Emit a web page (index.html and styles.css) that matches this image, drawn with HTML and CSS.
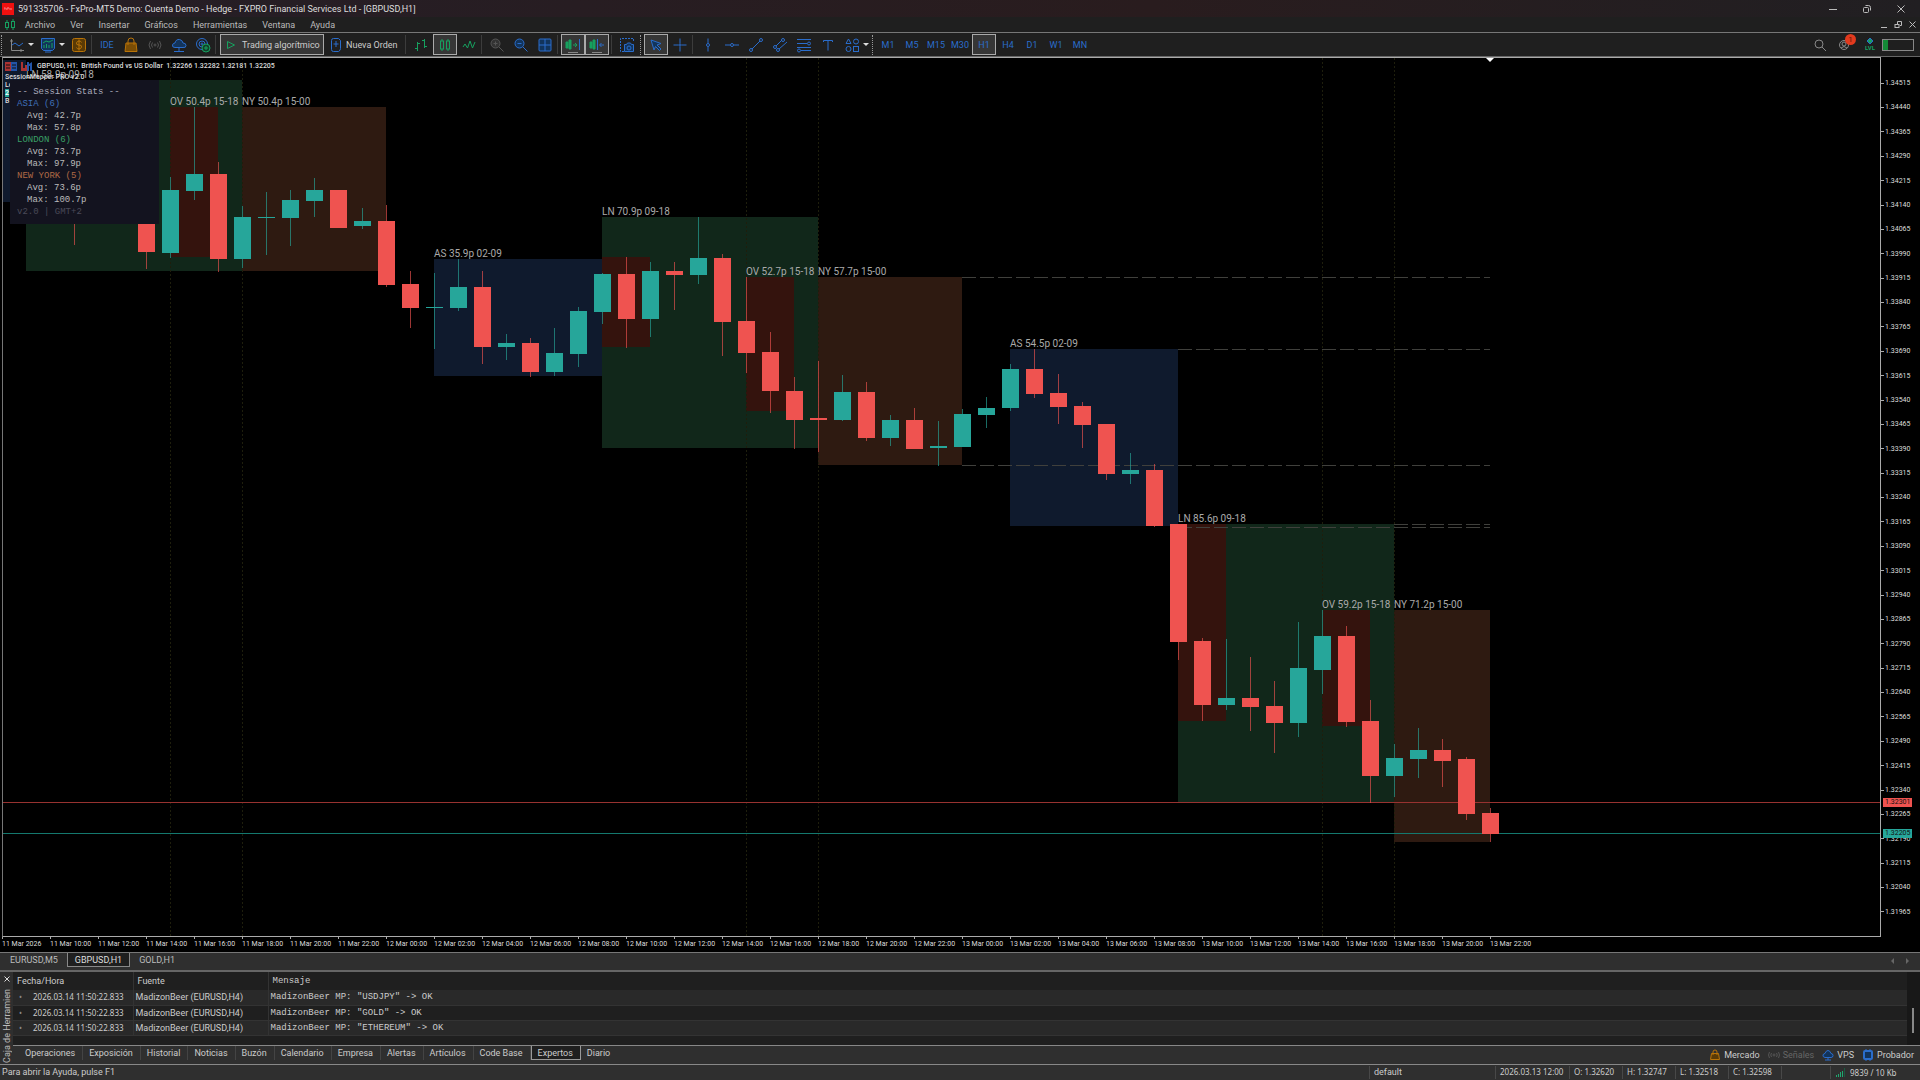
FILE: index.html
```html
<!DOCTYPE html>
<html lang="es">
<head>
    <meta charset="UTF-8">
    <meta name="viewport" content="width=device-width, initial-scale=1.0">
    <title>591335706 - FxPro-MT5 Demo</title>
    <link rel="stylesheet" href="styles.css">
</head>
<body>
    <header class="titlebar">
        <span class="logo">FxPro</span>
        <h1>591335706 - FxPro-MT5 Demo: Cuenta Demo - Hedge - FXPRO Financial Services Ltd - [GBPUSD,H1]</h1>
        <div class="window-buttons">
            <button aria-label="Minimizar"><svg width="10" height="10"><path d="M1 5.5h8"/></svg></button>
            <button aria-label="Restaurar"><svg width="10" height="10"><rect x="1.5" y="3.5" width="5" height="5" rx="1"/><path d="M3.5 1.5h3q2 0 2 2v3"/></svg></button>
            <button aria-label="Cerrar"><svg width="10" height="10"><path d="M1.5 1.5l7 7M8.5 1.5l-7 7"/></svg></button>
        </div>
    </header>

    <nav class="menubar">
        <svg class="green" width="12" height="12"><rect x="1.5" y="3.5" width="3" height="5"/><rect x="7.5" y="2.5" width="3" height="6"/><path d="M3 1v2M3 9v2M9 0v2M9 9v2"/></svg>
        <button>Archivo</button>
        <button>Ver</button>
        <button>Insertar</button>
        <button>Gráficos</button>
        <button>Herramientas</button>
        <button>Ventana</button>
        <button>Ayuda</button>
        <div class="mdi-buttons">
            <button aria-label="Minimizar gráfico"><svg width="9" height="9"><path d="M1 7.5h6"/></svg></button>
            <button aria-label="Restaurar gráfico"><svg width="9" height="9"><rect x="1" y="4.5" width="4" height="3"/><path d="M3.5 4V1.5h4v4H6"/></svg></button>
            <button aria-label="Cerrar gráfico"><svg width="9" height="9"><path d="M1.5 1.5l6 6M7.5 1.5l-6 6"/></svg></button>
        </div>
    </nav>

    <div class="toolbar">
        <i class="grip"></i>
        <button class="tool drop" aria-label="Tipo de gráfico"><svg width="16" height="16"><path class="grey" d="M2.5 2v11.5H15M1 4h3M12 12v3"/><path d="M3 8l3-2 4 3 4-3"/></svg></button>
        <button class="tool drop" aria-label="Indicadores"><svg width="16" height="16"><path fill="#12345c" d="M1.5 1.5h13v10l-2 2h-9l-2-2zM5 15h6"/><path class="green" d="M4 11V8M6.5 11V7M9 11V8M12 11V6M3 6l3-2 3 1 4-2"/></svg></button>
        <button class="tool orange" aria-label="Cuenta"><svg width="16" height="16"><rect x="1.5" y="1.5" width="13" height="13" rx="2" fill="#5a3a05"/><path d="M10.5 5.5Q10 4 8 4T5.5 6 8 8t2.5 2T8 12t-2.5-1.5M8 2.5v11"/></svg></button>
        <i class="sep"></i>
        <button class="tool text">IDE</button>
        <button class="tool orange" aria-label="Mercado"><svg width="16" height="16"><path fill="#7a4d05" d="M3 6h10l1 8.5H2z"/><path d="M5 8V4q0-3 3-3t3 3v4"/></svg></button>
        <button class="tool dim" aria-label="Señales"><svg width="16" height="16"><circle cx="8" cy="8" r="1"/><path d="M5.5 5.5q-2 2.5 0 5M10.5 5.5q2 2.5 0 5M3.5 4q-3 4 0 8M12.5 4q3 4 0 8"/></svg></button>
        <button class="tool" aria-label="VPS"><svg width="16" height="16"><path fill="#12345c" d="M4 10.5Q1 10.5 1.5 8 2 6 4 6q1-4 4.5-3.5Q11.5 3 12 6q3 0 3 2.5t-3 2zM8 11v3M3 14.5h10"/></svg></button>
        <button class="tool" aria-label="Copiar"><svg width="16" height="16"><circle cx="7" cy="7" r="5.5"/><circle cx="7" cy="7" r="3"/><circle cx="7" cy="7" r="1"/><circle class="green" cx="11" cy="11" r="4" fill="#12402b"/><path class="green" d="M11 9v4M9 11h4"/></svg></button>
        <i class="sep"></i>
        <button class="wide algo pressed"><svg class="green" width="12" height="12"><path d="M2.5 2.5v7L9.5 6z"/></svg>Trading algorítmico</button>
        <button class="wide order"><svg width="12" height="16"><path d="M3.5 1.5h5l2 2v8q0 2-2 3h-5q-2 0-2-2v-9q0-2 2-2zM6 4v6M3.5 7h5"/></svg>Nueva Orden</button>
        <i class="sep"></i>
        <button class="tool green" aria-label="Barras"><svg width="16" height="16"><path d="M4.5 5v9M2 11.5h2.5M4.5 6.5H7M11.5 2v9M9 3.5h2.5M11.5 9.5H14"/></svg></button>
        <button class="tool pressed green" aria-label="Velas"><svg width="16" height="16"><rect x="3.5" y="4" width="3" height="8"/><rect x="9.5" y="4" width="3" height="8"/><path d="M5 2v2M5 12v2M11 2v2M11 12v2"/></svg></button>
        <button class="tool green" aria-label="Línea"><svg width="16" height="16"><path d="M2 10l2-3 2.5 4L9 4l2.5 7L14 5"/></svg></button>
        <i class="sep"></i>
        <button class="tool dim" aria-label="Acercar"><svg width="16" height="16"><circle cx="6.5" cy="6.5" r="4.5" fill="#333"/><path d="M10 10l4.5 4.5M4.5 6.5h4M6.5 4.5v4"/></svg></button>
        <button class="tool" aria-label="Alejar"><svg width="16" height="16"><circle cx="6.5" cy="6.5" r="4.5" fill="#12345c"/><path d="M10 10l4.5 4.5M4.5 6.5h4"/></svg></button>
        <button class="tool" aria-label="Mosaico"><svg width="16" height="16"><rect x="2" y="2" width="12" height="12" rx="1" fill="#12345c"/><path d="M8 2v12M2 8h12"/></svg></button>
        <i class="sep"></i>
        <button class="tool pressed" aria-label="Autodesplazamiento"><svg width="18" height="16"><g class="green"><path fill="#16a05f" d="M2 5h2v6H2zM5 3h2v9H5z"/><path d="M9 8h4M11 6l2 2-2 2"/></g><path d="M15.5 2v11"/><path class="grey" d="M4 15.5h10"/></svg></button>
        <button class="tool pressed" aria-label="Desplazamiento"><svg width="18" height="16"><path class="green" fill="#16a05f" d="M2 5h2v6H2zM5 3h2v9H5z"/><path d="M9.5 2v11M16 8h-4M13.5 6l-2 2 2 2"/><path class="grey" d="M4 15.5h10"/></svg></button>
        <i class="sep spaced"></i>
        <button class="tool" aria-label="Captura"><svg width="16" height="16"><path stroke-dasharray="2 1" d="M5 14.5H1.5v-13h13V5"/><path fill="#12345c" d="M5.5 7.5h2l1-1.5h3l1 1.5h2v7h-9z"/><circle cx="10" cy="11" r="2"/></svg></button>
        <i class="grip"></i>
        <button class="tool pressed" aria-label="Cursor"><svg width="16" height="16"><path fill="#12345c" d="M3 3l10 3.5L9 8l4 4-1.5 1.5-4-4L6 13z"/></svg></button>
        <button class="tool" aria-label="Cruz"><svg width="16" height="16"><path d="M8 1.5v5M8 9.5v5M1.5 8h5M9.5 8h5"/><circle cx="8" cy="8" r="1"/></svg></button>
        <i class="sep"></i>
        <button class="tool" aria-label="Línea vertical"><svg width="16" height="16"><path d="M8 1.5V6M8 10v4.5"/><circle cx="8" cy="8" r="1.5"/></svg></button>
        <button class="tool" aria-label="Línea horizontal"><svg width="16" height="16"><path d="M1 8h5M10 8h5"/><circle cx="8" cy="8" r="1.5"/></svg></button>
        <button class="tool" aria-label="Línea de tendencia"><svg width="16" height="16"><path d="M4 12l8-8"/><circle cx="3" cy="13" r="1.5"/><circle cx="13" cy="3" r="1.5"/></svg></button>
        <button class="tool" aria-label="Canal"><svg width="16" height="16"><path d="M4 9l6-6M7 12l8-7"/><circle cx="3" cy="10" r="1.5"/><circle cx="11" cy="3" r="1.5"/><circle cx="6" cy="13" r="1.5"/></svg></button>
        <button class="tool" aria-label="Fibonacci"><svg width="16" height="16"><path d="M1 2.5h14M1 6.5h10M1 10.5h14M5 13.5h10"/><circle cx="13" cy="6.5" r="1.5"/><circle cx="3" cy="13.5" r="1.5"/></svg></button>
        <button class="tool" aria-label="Texto"><svg width="16" height="16"><path d="M3.5 5V3.5h9V5M8 3.5v10"/></svg></button>
        <button class="tool drop" aria-label="Objetos"><svg width="16" height="16"><path d="M4.5 2L7 6.5H2z"/><circle cx="12" cy="4.5" r="2.5"/><circle cx="4.5" cy="12" r="2.5"/><rect x="9.5" y="9.5" width="5" height="5"/></svg></button>
        <i class="grip"></i>
        <button class="tool text">M1</button>
        <button class="tool text">M5</button>
        <button class="tool text">M15</button>
        <button class="tool text">M30</button>
        <button class="tool text pressed">H1</button>
        <button class="tool text">H4</button>
        <button class="tool text">D1</button>
        <button class="tool text">W1</button>
        <button class="tool text">MN</button>
        <div class="tool-right">
            <button class="tool grey" aria-label="Buscar"><svg width="14" height="14"><circle cx="6" cy="6" r="4"/><path d="M9 9l4 4"/></svg></button>
            <button class="tool grey user" aria-label="Perfil"><svg width="14" height="14"><circle cx="7" cy="7" r="4.5"/><circle cx="7" cy="6" r="2"/><path d="M4 10q3-3 6 0"/></svg><span class="badge">1</span></button>
            <button class="tool level"><svg width="8" height="7"><path fill="#16a05f" d="M4 0l3 3-3 3-3-3z"/></svg>LVL</button>
            <progress class="battery" max="100" value="18" aria-label="Nivel"></progress>
        </div>
    </div>

    <main class="chart">
        <div class="plot">
            <svg id="plot" class="plot-svg"></svg>
            <div class="chart-title">
                <svg width="29" height="9"><path fill="#a33" d="M0 0h6v9H0z"/><path fill="#25a" d="M6 0h6v9H6z"/><path stroke="#111" d="M1 3h4M7 3h4M1 6h4M7 6h4"/><path fill="#a33" d="M16 0h2v6h2V3h2v6h-6z"/><path fill="#25a" d="M22 9V0h2v2l3-2v9h-2V4h-1v5z"/></svg>
                <span>GBPUSD, H1:&nbsp; British Pound vs US Dollar&nbsp; 1.32266 1.32282 1.32181 1.32205</span>
            </div>
            <div class="comment">SessionMapper PRO v2.0<br>Lo<br><mark>2</mark><br>B</div>
            <section class="stats">
                <h2>-- Session Stats --</h2>
                <p class="asia">ASIA (6)</p>
                <p class="sub">Avg: 42.7p</p>
                <p class="sub">Max: 57.8p</p>
                <p class="london">LONDON (6)</p>
                <p class="sub">Avg: 73.7p</p>
                <p class="sub">Max: 97.9p</p>
                <p class="newyork">NEW YORK (5)</p>
                <p class="sub">Avg: 73.6p</p>
                <p class="sub">Max: 100.7p</p>
                <p class="version">v2.0 | GMT+2</p>
            </section>
        </div>
        <div class="prices" id="prices">
            <span class="tag bid">1.32301</span>
            <span class="tag ask">1.32205</span>
        </div>
        <div class="times" id="times"></div>
    </main>

    <div class="chart-tabs">
        <button>EURUSD,M5</button>
        <button class="active">GBPUSD,H1</button>
        <button>GOLD,H1</button>
        <div class="arrows"><button aria-label="Anterior" class="prev"></button><button aria-label="Siguiente" class="next"></button></div>
    </div>

    <section class="toolbox">
        <aside class="toolbox-side">
            <button aria-label="Cerrar"><svg width="8" height="8"><path d="M1.5 1.5l5 5M6.5 1.5l-5 5"/></svg></button>
            <span>Caja de Herramien</span>
        </aside>
        <div class="log">
            <table>
                <thead>
                    <tr><th class="date">Fecha/Hora</th><th class="source">Fuente</th><th class="mono">Mensaje</th></tr>
                </thead>
                <tbody>
                    <tr><td>2026.03.14 11:50:22.833</td><td>MadizonBeer (EURUSD,H4)</td><td class="mono">MadizonBeer MP: "USDJPY" -&gt; OK</td></tr>
                    <tr><td>2026.03.14 11:50:22.833</td><td>MadizonBeer (EURUSD,H4)</td><td class="mono">MadizonBeer MP: "GOLD" -&gt; OK</td></tr>
                    <tr><td>2026.03.14 11:50:22.833</td><td>MadizonBeer (EURUSD,H4)</td><td class="mono">MadizonBeer MP: "ETHEREUM" -&gt; OK</td></tr>
                </tbody>
            </table>
            <div class="scrollbar"><i></i></div>
        </div>
        <div class="toolbox-tabs">
            <button>Operaciones</button>
            <button>Exposición</button>
            <button>Historial</button>
            <button>Noticias</button>
            <button>Buzón</button>
            <button>Calendario</button>
            <button>Empresa</button>
            <button>Alertas</button>
            <button>Artículos</button>
            <button>Code Base</button>
            <button class="active">Expertos</button>
            <button>Diario</button>
            <div class="services">
                <a href="#"><svg class="orange" width="12" height="12"><path fill="#5a3a05" d="M2.5 4.5h7l1 6h-9z"/><path d="M4 6V3q0-2 2-2t2 2v3"/></svg>Mercado</a>
                <a href="#" class="off"><svg class="dim" width="12" height="12"><circle cx="6" cy="6" r="1"/><path d="M3.5 4q-1.5 2 0 4M8.5 4q1.5 2 0 4M1.5 3q-2 3 0 6M10.5 3q2 3 0 6"/></svg>Señales</a>
                <a href="#"><svg width="12" height="12"><path fill="#12345c" d="M3 8.5Q.5 8 1 6q.5-1.5 2-1.5Q4 1.5 6 1.5t3 3q2 0 2 2t-2 2zM6 8v3M3 11h6"/></svg>VPS</a>
                <a href="#"><svg width="12" height="12"><rect x="2" y="2" width="8" height="8" rx="1" stroke-width="2" fill="#12345c"/><path d="M4 0v12M8 0v12" stroke-dasharray="1 10"/></svg>Probador</a>
            </div>
        </div>
    </section>

    <footer class="statusbar">
        <span class="help">Para abrir la Ayuda, pulse F1</span>
        <span class="profile">default</span>
        <span class="stamp">2026.03.13 12:00</span>
        <span class="ohlc">O: 1.32620</span>
        <span class="ohlc">H: 1.32747</span>
        <span class="ohlc">L: 1.32518</span>
        <span class="ohlc">C: 1.32598</span>
        <span class="blank"></span>
        <span class="traffic"><svg width="11" height="9"><path stroke="#1fa870" d="M1.5 9V7M3.5 9V6M5.5 9V4M7.5 9V3"/><path stroke="#1a5a40" d="M9.5 9V0"/></svg>9839 / 10 Kb</span>
    </footer>

    <script src="chart.js"></script>
</body>
</html>
```
FILE: styles.css
```css
* {
    box-sizing: border-box;
    margin: 0;
    padding: 0;
}

body {
    min-height: 100vh;
    display: flex;
    flex-direction: column;
    background: #1f1f1f;
    color: #ccc;
    font: 9px/12px Roboto, "Open Sans", sans-serif;
    overflow: hidden;
}

button {
    border: none;
    background: none;
    color: inherit;
    font: inherit;
    white-space: nowrap;
}

a {
    color: inherit;
    text-decoration: none;
}

svg {
    fill: none;
    stroke: #2a6dcc;
    flex: none;
}

.grey, .grey svg { stroke: #888; }
.green, .green svg { stroke: #16a05f; }
.orange, .orange svg { stroke: #b87308; }
.dim, .dim svg { stroke: #555; }

/* title and menu */
.titlebar {
    height: 17px;
    display: flex;
    align-items: center;
    background: linear-gradient(90deg, #251e26, #291c1e 60%, #211f22);
}

.logo {
    width: 12px;
    height: 12px;
    margin: 0 4px 0 2px;
    background: #f01010;
    color: #fbb;
    font-size: 3px;
    text-align: center;
}

h1 {
    font-size: 9px;
    font-weight: normal;
    color: #ddd;
}

.window-buttons, .mdi-buttons {
    margin-left: auto;
    display: flex;
    align-items: center;
}

.window-buttons svg, .mdi-buttons svg {
    stroke: #bbb;
    display: block;
}

.window-buttons {
    gap: 24px;
    padding-right: 14px;
}

.mdi-buttons {
    gap: 5px;
    padding-right: 3px;
}

.menubar {
    height: 15px;
    display: flex;
    align-items: center;
    padding-left: 4px;
    color: #bbb;
}

.menubar > button {
    margin-left: 15px;
}

.menubar > svg + button {
    margin-left: 9px;
}

/* toolbar */
.toolbar {
    height: 25px;
    display: flex;
    align-items: center;
    border-top: 1px solid #777;
    border-bottom: 1px solid #666;
}

.grip {
    width: 4px;
    height: 20px;
    border-left: 1px dotted #999;
    margin-left: 1px;
}

.sep {
    width: 4px;
    height: 19px;
    border-left: 1px solid #3c3c3c;
}

.sep.spaced {
    margin-left: 2px;
}

.tool {
    width: 24px;
    height: 21px;
    display: flex;
    align-items: center;
    justify-content: center;
}

.tool.drop {
    width: 31px;
    gap: 3px;
    justify-content: flex-start;
    padding-left: 4px;
}

.drop::after {
    content: "";
    border: 3px solid transparent;
    border-top-color: #ddd;
    border-bottom: none;
}

.text {
    color: #2a6dcc;
}

.pressed {
    background: #363636;
    border: 1px solid #aaa;
}

.wide {
    height: 21px;
    display: flex;
    align-items: center;
    gap: 5px;
    padding: 0 4px;
}

.algo {
    width: 104px;
    margin-left: 1px;
}

.order {
    width: 81px;
    gap: 4px;
    padding-left: 6px;
}

.tool-right {
    margin-left: auto;
    display: flex;
    align-items: center;
    padding-right: 6px;
}

.user {
    position: relative;
}

.badge {
    position: absolute;
    top: 0;
    right: 0;
    width: 11px;
    height: 11px;
    border-radius: 50%;
    background: #e23a1e;
    color: #5a1408;
    font-size: 8px;
    line-height: 11px;
}

.level {
    flex-direction: column;
    color: #16a05f;
    font-size: 6px;
    line-height: 6px;
    font-weight: bold;
    margin-left: 2px;
}

.battery {
    appearance: none;
    width: 32px;
    height: 12px;
    border: 1px solid #888;
}

.battery::-webkit-progress-bar {
    background: #1f1f1f;
}

.battery::-webkit-progress-value {
    background: #138a36;
}

/* chart */
.chart {
    flex: 1;
    display: grid;
    grid-template-columns: 1fr 39px;
    grid-template-rows: 1fr 15px;
    background: #000;
    color: #ddd;
    font: 7px/10px Roboto, "Liberation Sans", sans-serif;
}

.plot {
    position: relative;
    min-height: 400px;
    border: 1px solid #aaa;
    border-left-color: #777;
    margin-left: 2px;
    overflow: hidden;
}

.plot-svg {
    position: absolute;
    top: 0;
    left: 0;
    width: 100%;
    height: 100%;
    stroke: none;
    font: 10px Roboto, "Liberation Sans", sans-serif;
}

.plot-svg .label { fill: #aaa; }
.plot-svg .as { fill: #0f1a2d; }
.plot-svg .ln { fill: #11271a; }
.plot-svg .ny { fill: #2e1a11; }
.plot-svg .ov { fill: #34130d; }
.plot-svg .up { fill: #26a69a; }
.plot-svg .down { fill: #ef5350; }
.plot-svg .wick { opacity: 0.65; }
.plot-svg .day { stroke: #1e1e0c; stroke-dasharray: 2 2; }
.plot-svg .level-line { stroke: #40403c; stroke-dasharray: 14 4; }
.plot-svg .bid-line { stroke: #983230; }
.plot-svg .ask-line { stroke: #14786e; }
.plot-svg .marker { fill: #fff; }

.chart-title {
    position: absolute;
    top: 3px;
    left: 2px;
    display: flex;
    align-items: center;
    gap: 3px;
    font-weight: 500;
}

.chart-title svg {
    stroke: none;
}

.comment {
    position: absolute;
    top: 15px;
    left: 2px;
    line-height: 8px;
    font-weight: 500;
}

.comment mark {
    background: #26a69a;
    color: #fff;
}

.stats {
    position: absolute;
    top: 22px;
    left: 7px;
    width: 149px;
    height: 144px;
    padding: 6px 7px;
    background: #13131f;
    color: #bbb;
    font: 9px/12px "Liberation Mono", monospace;
}

.stats h2 {
    font: inherit;
    color: #aab;
}

.sub { padding-left: 10px; }
.asia { color: #3f6fb8; }
.london { color: #3aa066; }
.newyork { color: #b06a45; }
.version { color: #4a4a58; }

.prices {
    position: relative;
    display: flex;
    flex-direction: column;
    justify-content: space-between;
    padding: 21px 0 20px;
}

.price::before {
    content: "";
    display: inline-block;
    width: 3px;
    height: 1px;
    margin-right: 1px;
    background: #aaa;
    vertical-align: middle;
}

.tag {
    position: absolute;
    left: 2px;
    width: 29px;
    height: 9px;
    line-height: 9px;
    padding-left: 2px;
    color: #111;
}

.bid { top: 741px; background: #ef5350; }
.ask { top: 772px; background: #26a69a; }

.times {
    grid-column: 1 / -1;
    display: flex;
    padding-left: 2px;
}

.time {
    width: 48px;
    flex: none;
    white-space: nowrap;
}

.time::before {
    content: "";
    display: block;
    width: 1px;
    height: 2px;
    background: #aaa;
}

/* chart tabs */
.chart-tabs {
    height: 18px;
    display: flex;
    align-items: flex-start;
    padding-left: 3px;
    background: #2f2f2f;
    border-top: 1px solid #777;
    color: #bbb;
}

.chart-tabs > button {
    height: 14px;
    padding: 0 7px;
}

.chart-tabs .active {
    margin: 0 2px;
    background: #1f1f1f;
    border: 1px solid #888;
    border-top: none;
    color: #ddd;
}

.arrows {
    margin-left: auto;
    display: flex;
    gap: 12px;
    padding: 5px 8px 0 0;
}

.arrows button {
    border: 3px solid transparent;
}

.arrows .prev { border-right-color: #666; }
.arrows .next { border-left-color: #666; }

/* toolbox */
.toolbox {
    display: grid;
    grid-template-columns: 13px 1fr;
    grid-template-rows: 74px 18px;
    background: #2f2f2f;
    border-top: 2px solid #666;
}

.toolbox-side {
    grid-row: 1 / 3;
    display: flex;
    flex-direction: column;
    align-items: center;
    overflow: hidden;
    color: #bbb;
}

.toolbox-side svg {
    stroke: #ddd;
    display: block;
    margin: 3px 0 6px;
}

.toolbox-side span {
    writing-mode: vertical-rl;
    transform: rotate(180deg);
    white-space: nowrap;
}

.log {
    display: flex;
    background: #1f1f1f;
    border-bottom: 1px solid #888;
    overflow: hidden;
}

table {
    flex: 1;
    align-self: flex-start;
    border-collapse: collapse;
    table-layout: fixed;
    text-align: left;
    white-space: nowrap;
}

th {
    height: 18px;
    padding-left: 4px;
    font-weight: normal;
    border-left: 1px solid #333;
}

.date { width: 120px; }
.source { width: 135px; }

td {
    height: 15px;
    padding-left: 2px;
    border-left: 1px solid #333;
    border-bottom: 1px solid #333;
}

th:first-child, td:first-child {
    border-left: none;
}

td:first-child, .stamp, .ohlc, .traffic {
    font: 8px/12px "Noto Sans", sans-serif;
}

td:first-child::before {
    content: "•";
    display: inline-block;
    width: 10px;
    padding-left: 4px;
    margin-right: 4px;
    color: #888;
}

tbody tr:nth-child(odd) {
    background: #292929;
}

.mono {
    font: 9px/12px "Liberation Mono", monospace;
}

.scrollbar {
    width: 13px;
    background: #181818;
    padding: 36px 5px 0;
}

.scrollbar i {
    display: block;
    width: 2px;
    height: 25px;
    background: #888;
}

.toolbox-tabs {
    display: flex;
    align-items: flex-start;
    padding-left: 6px;
}

.toolbox-tabs > button {
    height: 14px;
    padding: 0 7px 0 6px;
    border-right: 1px solid #444;
}

.toolbox-tabs > .active {
    background: #1f1f1f;
    border: 1px solid #999;
    border-top: none;
}

.toolbox-tabs > .active + button {
    border: none;
}

.services {
    margin-left: auto;
    display: flex;
    gap: 8px;
    padding: 3px 6px 0 0;
}

.services a {
    display: flex;
    align-items: center;
    gap: 3px;
}

.off {
    color: #666;
}

/* status bar */
.statusbar {
    height: 16px;
    display: flex;
    align-items: center;
    border-top: 1px solid #888;
    background: #2f2f2f;
    white-space: nowrap;
}

.statusbar span {
    height: 13px;
    padding-left: 4px;
    border-left: 1px solid #484848;
}

.statusbar .help {
    flex: 1;
    padding-left: 2px;
    border: none;
}

.profile { width: 126px; }
.stamp { width: 74px; }
.ohlc { width: 53px; }
.blank { width: 49px; }

.traffic {
    width: 90px;
    display: flex;
    align-items: center;
    gap: 4px;
}
```
FILE: chart.js
```js
// x, body top, body bottom, wick top, wick bottom, direction
const candles = [
    [74, 200, 223, 190, 245, 'down'],
    [146, 215, 252, 205, 269, 'down'],
    [170, 190, 253, 177, 258, 'up'],
    [194, 174, 191, 107, 200, 'up'],
    [218, 174, 259, 162, 272, 'down'],
    [242, 217, 259, 206, 268, 'up'],
    [266, 217, 218, 192, 255, 'up'],
    [290, 200, 218, 190, 246, 'up'],
    [314, 190, 201, 178, 217, 'up'],
    [338, 190, 228, 190, 228, 'down'],
    [362, 221, 226, 208, 229, 'up'],
    [386, 221, 285, 205, 287, 'down'],
    [410, 284, 308, 271, 328, 'down'],
    [434, 307, 308, 273, 349, 'up'],
    [458, 287, 308, 259, 311, 'up'],
    [482, 287, 347, 271, 364, 'down'],
    [506, 343, 347, 334, 360, 'up'],
    [530, 343, 372, 338, 377, 'down'],
    [554, 353, 372, 328, 376, 'up'],
    [578, 311, 354, 307, 367, 'up'],
    [602, 274, 312, 273, 324, 'up'],
    [626, 274, 319, 257, 348, 'down'],
    [650, 271, 319, 262, 337, 'up'],
    [674, 271, 275, 262, 310, 'down'],
    [698, 258, 275, 217, 284, 'up'],
    [722, 258, 322, 254, 356, 'down'],
    [746, 321, 353, 277, 373, 'down'],
    [770, 352, 391, 332, 413, 'down'],
    [794, 391, 420, 377, 449, 'down'],
    [818, 418, 420, 361, 452, 'down'],
    [842, 392, 420, 375, 421, 'up'],
    [866, 392, 438, 382, 441, 'down'],
    [890, 420, 438, 415, 446, 'up'],
    [914, 420, 449, 408, 449, 'down'],
    [938, 446, 448, 421, 466, 'up'],
    [962, 414, 447, 409, 447, 'up'],
    [986, 408, 415, 397, 428, 'up'],
    [1010, 369, 408, 364, 411, 'up'],
    [1034, 369, 394, 349, 398, 'down'],
    [1058, 393, 407, 374, 424, 'down'],
    [1082, 406, 425, 402, 448, 'down'],
    [1106, 424, 474, 424, 480, 'down'],
    [1130, 470, 474, 453, 484, 'up'],
    [1154, 470, 526, 464, 527, 'down'],
    [1178, 524, 642, 524, 660, 'down'],
    [1202, 641, 705, 638, 721, 'down'],
    [1226, 698, 705, 639, 710, 'up'],
    [1250, 698, 707, 657, 731, 'down'],
    [1274, 706, 723, 681, 753, 'down'],
    [1298, 668, 723, 622, 737, 'up'],
    [1322, 636, 670, 610, 694, 'up'],
    [1346, 636, 722, 626, 727, 'down'],
    [1370, 721, 776, 700, 803, 'down'],
    [1394, 758, 776, 744, 797, 'up'],
    [1418, 750, 759, 728, 778, 'up'],
    [1442, 750, 761, 739, 787, 'down'],
    [1466, 759, 814, 757, 820, 'down'],
    [1490, 813, 834, 808, 842, 'down']
];

// x1, y1, x2, y2, session, label
const sessions = [
    [3, 60, 26, 202, 'as', ''],
    [26, 80, 242, 271, 'ln', 'LN 58.9p 09-18'],
    [170, 107, 218, 257, 'ov', 'OV 50.4p 15-18'],
    [242, 107, 386, 271, 'ny', 'NY 50.4p 15-00'],
    [434, 259, 602, 376, 'as', 'AS 35.9p 02-09'],
    [602, 217, 818, 448, 'ln', 'LN 70.9p 09-18'],
    [602, 257, 650, 347, 'ov', ''],
    [746, 277, 794, 411, 'ov', 'OV 52.7p 15-18'],
    [818, 277, 962, 465, 'ny', 'NY 57.7p 15-00'],
    [1010, 349, 1178, 526, 'as', 'AS 54.5p 02-09'],
    [1178, 524, 1394, 803, 'ln', 'LN 85.6p 09-18'],
    [1178, 524, 1226, 721, 'ov', ''],
    [1322, 610, 1370, 726, 'ov', 'OV 59.2p 15-18'],
    [1394, 610, 1490, 842, 'ny', 'NY 71.2p 15-00']
];

// session highs and lows drawn on to the last bar
const levels = [[962, 277], [1178, 349], [962, 465], [1394, 524], [1178, 527]];
const days = [170, 242, 746, 818, 1322, 1394];

const rect = (x, y, w, h, cls) =>
    `<rect x="${x}" y="${y}" width="${w}" height="${h}" class="${cls}"/>`;

let svg = '<g transform="translate(-3 -58)">';
sessions.forEach(([x1, y1, x2, y2, cls]) => {
    svg += rect(x1, y1, x2 - x1, y2 - y1, cls);
});
days.forEach(x => {
    svg += `<path class="day" d="M${x + 0.5} 58V936"/>`;
});
levels.forEach(([x, y]) => {
    svg += `<path class="level-line" d="M${x} ${y + 0.5}H1490"/>`;
});
svg += '<path class="bid-line" d="M0 802.5H4000"/><path class="ask-line" d="M0 833.5H4000"/>';
candles.forEach(([x, top, bottom, high, low, cls]) => {
    svg += rect(x, high, 1, low - high, cls + ' wick');
    svg += rect(x - 8, top, 17, bottom - top, cls);
});
sessions.forEach(([x, y, , , , label]) => {
    svg += `<text class="label" x="${x}" y="${y - 2}">${label}</text>`;
});
svg += '<path class="marker" d="M1486 58h8l-4 4z"/></g>';
document.getElementById('plot').innerHTML = svg;

const prices = document.getElementById('prices');
for (let i = 0; i < 35; i++) {
    const span = document.createElement('span');
    span.className = 'price';
    span.textContent = (1.34515 - i * 0.00075).toFixed(5);
    prices.insertBefore(span, prices.querySelector('.tag'));
}

const times = document.getElementById('times');
for (let i = 0; i < 32; i++) {
    const hour = 8 + i * 2;
    const span = document.createElement('span');
    span.className = 'time';
    span.textContent = i === 0
        ? '11 Mar 2026'
        : `${11 + Math.floor(hour / 24)} Mar ${String(hour % 24).padStart(2, '0')}:00`;
    times.appendChild(span);
}
```
